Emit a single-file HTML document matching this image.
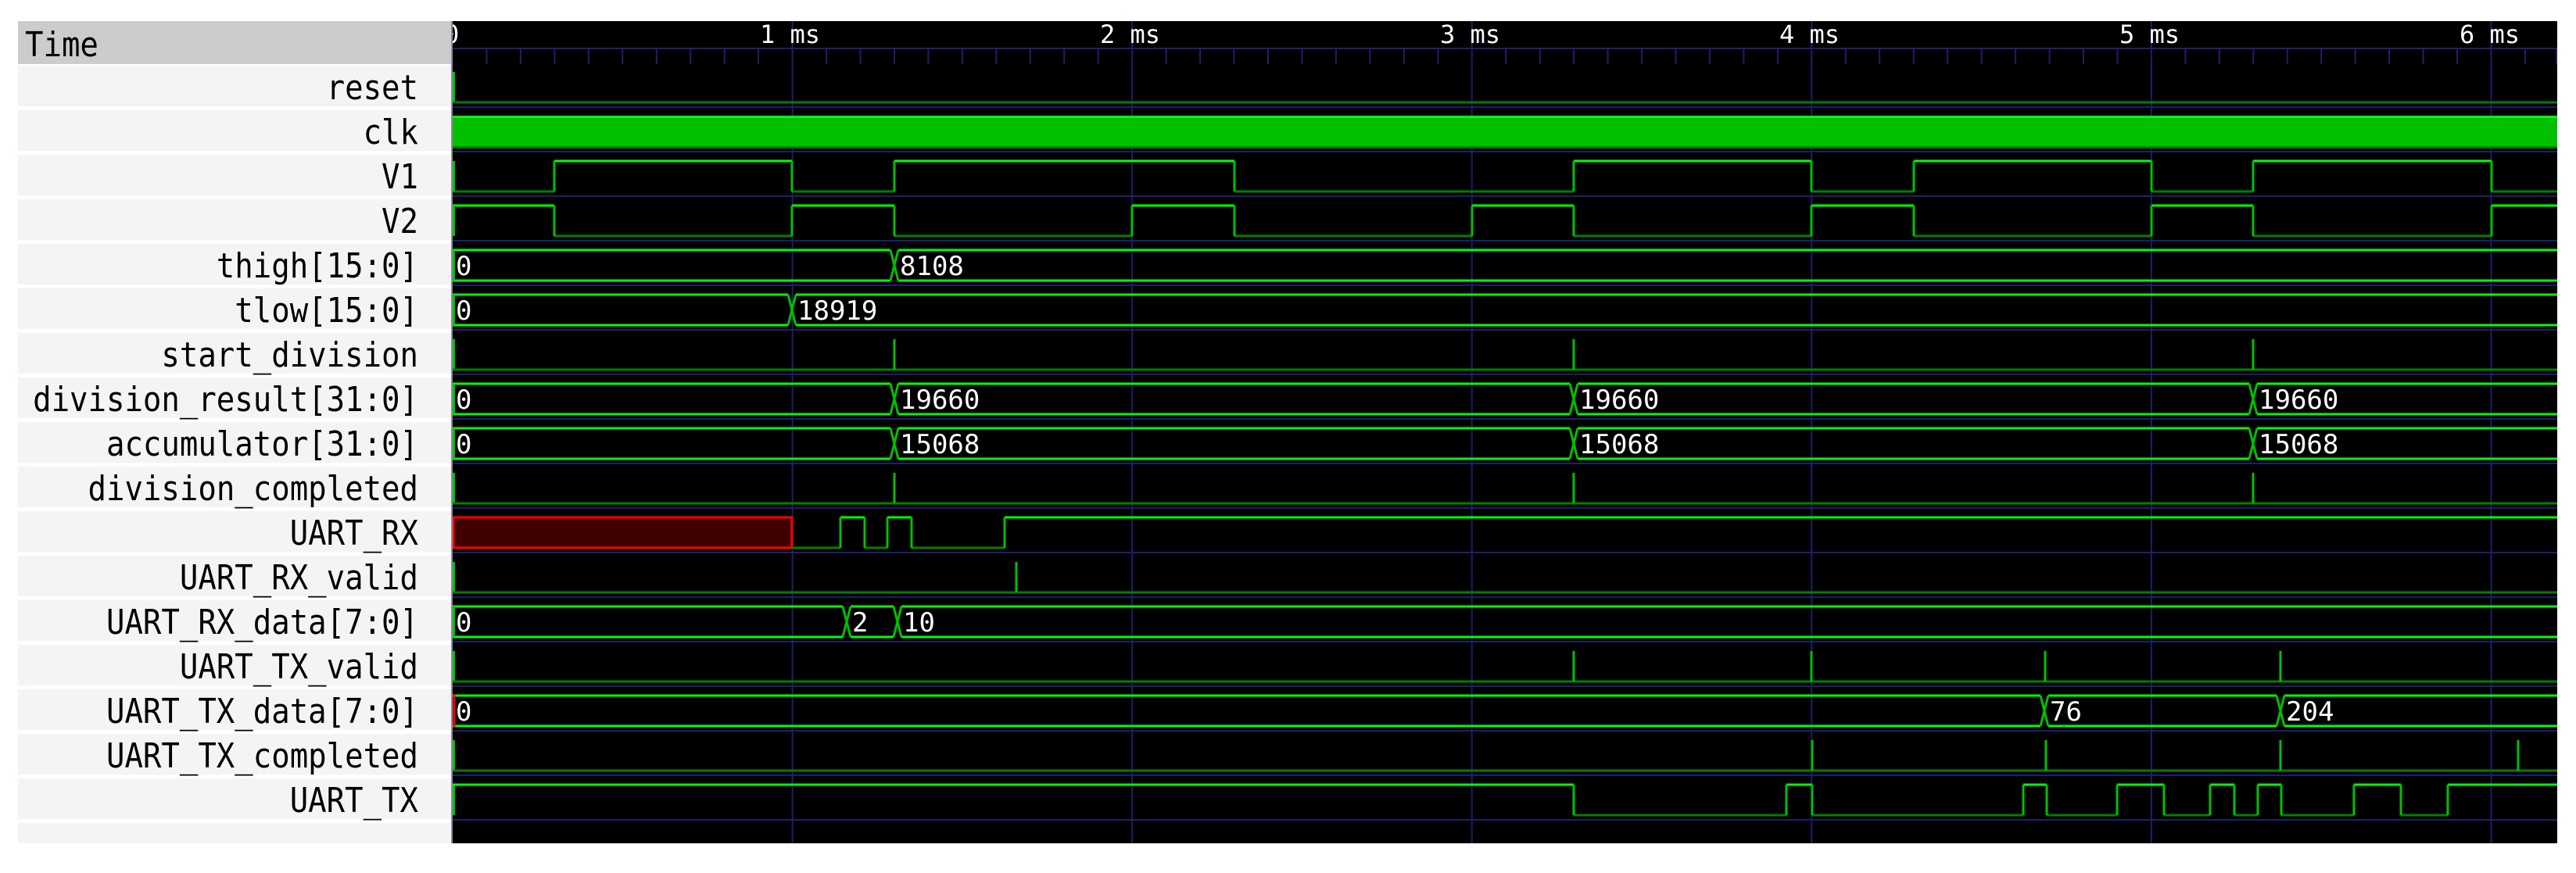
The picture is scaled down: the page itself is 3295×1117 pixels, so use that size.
<!DOCTYPE html>
<html><head><meta charset="utf-8"><style>
html,body{margin:0;padding:0;background:#fff;width:3295px;height:1117px;overflow:hidden}
svg{display:block}
.lb{font-family:"DejaVu Sans Mono","Liberation Mono",monospace;font-size:39px;fill:#000}
.vt{font-family:"DejaVu Sans Mono","Liberation Mono",monospace;font-size:34px;fill:#fff}
.rt{font-family:"DejaVu Sans Mono","Liberation Mono",monospace;font-size:32px;fill:#fff}
.hi{stroke:#00ff00;stroke-width:3;fill:none}
.lo{stroke:#008000;stroke-width:3;fill:none}
.ed{stroke:#00c000;stroke-width:3;fill:none}
.nv{stroke:#1e1e6e;stroke-width:2;fill:none}
</style></head><body>
<svg width="3295" height="1117" viewBox="0 0 3295 1117" xmlns="http://www.w3.org/2000/svg">
<defs><clipPath id="pc"><rect x="579" y="27" width="2692" height="1052"/></clipPath></defs>
<rect x="0" y="0" width="3295" height="1117" fill="#fff"/>
<!-- label panel -->
<rect x="23" y="27" width="554" height="55" fill="#cccccc"/>
<g fill="#f5f3f3">
<rect x="23" y="84" width="554" height="52"/><rect x="23" y="141" width="554" height="52"/><rect x="23" y="198" width="554" height="52"/><rect x="23" y="255" width="554" height="52"/><rect x="23" y="312" width="554" height="52"/><rect x="23" y="369" width="554" height="52"/><rect x="23" y="426" width="554" height="52"/><rect x="23" y="483" width="554" height="52"/><rect x="23" y="540" width="554" height="52"/><rect x="23" y="597" width="554" height="52"/><rect x="23" y="654" width="554" height="52"/><rect x="23" y="711" width="554" height="52"/><rect x="23" y="768" width="554" height="52"/><rect x="23" y="825" width="554" height="52"/><rect x="23" y="882" width="554" height="52"/><rect x="23" y="939" width="554" height="52"/><rect x="23" y="996" width="554" height="52"/><rect x="23" y="1053" width="554" height="26"/>
</g>
<text class="lb" transform="translate(32,72) scale(1,1.12)">Time</text>
<g class="lb" text-anchor="end">
<text transform="translate(535,127) scale(1,1.12)">reset</text>
<text transform="translate(535,184) scale(1,1.12)">clk</text>
<text transform="translate(535,241) scale(1,1.12)">V1</text>
<text transform="translate(535,298) scale(1,1.12)">V2</text>
<text transform="translate(535,355) scale(1,1.12)">thigh[15:0]</text>
<text transform="translate(535,412) scale(1,1.12)">tlow[15:0]</text>
<text transform="translate(535,469) scale(1,1.12)">start_division</text>
<text transform="translate(535,526) scale(1,1.12)">division_result[31:0]</text>
<text transform="translate(535,583) scale(1,1.12)">accumulator[31:0]</text>
<text transform="translate(535,640) scale(1,1.12)">division_completed</text>
<text transform="translate(535,697) scale(1,1.12)">UART_RX</text>
<text transform="translate(535,754) scale(1,1.12)">UART_RX_valid</text>
<text transform="translate(535,811) scale(1,1.12)">UART_RX_data[7:0]</text>
<text transform="translate(535,868) scale(1,1.12)">UART_TX_valid</text>
<text transform="translate(535,925) scale(1,1.12)">UART_TX_data[7:0]</text>
<text transform="translate(535,982) scale(1,1.12)">UART_TX_completed</text>
<text transform="translate(535,1039) scale(1,1.12)">UART_TX</text>
</g>
<!-- wave panel -->
<rect x="577" y="27" width="2694" height="1052" fill="#000"/>
<rect x="577" y="27" width="2" height="1052" fill="#8a8aa0"/>
<g clip-path="url(#pc)">
<!-- ruler -->
<path class="nv" d="M579 62H3271"/>
<path class="nv" d="M622.5 62V82M665.9 62V82M709.4 62V82M752.8 62V82M796.3 62V82M839.8 62V82M883.2 62V82M926.7 62V82M970.1 62V82M1057 62V82M1100.5 62V82M1144 62V82M1187.4 62V82M1230.9 62V82M1274.3 62V82M1317.8 62V82M1361.2 62V82M1404.7 62V82M1491.6 62V82M1535.1 62V82M1578.5 62V82M1622 62V82M1665.4 62V82M1708.9 62V82M1752.4 62V82M1795.8 62V82M1839.3 62V82M1926.2 62V82M1969.7 62V82M2013.1 62V82M2056.6 62V82M2100 62V82M2143.5 62V82M2186.9 62V82M2230.4 62V82M2273.9 62V82M2360.8 62V82M2404.2 62V82M2447.7 62V82M2491.1 62V82M2534.6 62V82M2578.1 62V82M2621.5 62V82M2665 62V82M2708.4 62V82M2795.4 62V82M2838.8 62V82M2882.3 62V82M2925.7 62V82M2969.2 62V82M3012.6 62V82M3056.1 62V82M3099.5 62V82M3143 62V82M3229.9 62V82M3270 62V82"/>
<path class="nv" d="M1013.6 27V1079M1448.2 27V1079M1882.7 27V1079M2317.3 27V1079M2751.9 27V1079M3186.5 27V1079"/>
<path class="nv" d="M579 137H3271M579 194H3271M579 251H3271M579 308H3271M579 365H3271M579 422H3271M579 479H3271M579 536H3271M579 593H3271M579 650H3271M579 707H3271M579 764H3271M579 821H3271M579 878H3271M579 935H3271M579 992H3271M579 1049H3271"/>
<g class="rt">
<text x="568" y="55">0</text>
<text x="972" y="55">1 ms</text>
<text x="1407" y="55">2 ms</text>
<text x="1842" y="55">3 ms</text>
<text x="2276" y="55">4 ms</text>
<text x="2711" y="55">5 ms</text>
<text x="3146" y="55">6 ms</text>
</g>
<!-- initial edges -->
<path class="ed" d="M580.5 92V131M580.5 434V473M580.5 605V644M580.5 719V758M580.5 833V872M580.5 947V986M580.5 1004V1043"/>
<!-- reset -->
<path class="lo" d="M579 131H3271"/>
<!-- clk -->
<rect x="579" y="149" width="2692" height="40" fill="#00c000"/>
<path class="hi" d="M579 149.5H3271"/><path class="lo" d="M579 188.5H3271"/>
<!-- V1 -->
<path class="hi" d="M709 206H1013M1144 206H1579M2013 206H2317M2448 206H2752M2882 206H3187"/>
<path class="lo" d="M579 245H709M1013 245H1144M1579 245H2013M2317 245H2448M2752 245H2882M3187 245H3271"/>
<path class="ed" d="M580.5 206V245M709 206V245M1013 206V245M1144 206V245M1579 206V245M2013 206V245M2317 206V245M2448 206V245M2752 206V245M2882 206V245M3187 206V245"/>
<!-- V2 -->
<path class="hi" d="M579 263H709M1013 263H1144M1448 263H1579M1883 263H2013M2317 263H2448M2752 263H2882M3187 263H3271"/>
<path class="lo" d="M709 302H1013M1144 302H1448M1579 302H1883M2013 302H2317M2448 302H2752M2882 302H3187"/>
<path class="ed" d="M580.5 263V302M709 263V302M1013 263V302M1144 263V302M1448 263V302M1579 263V302M1883 263V302M2013 263V302M2317 263V302M2448 263V302M2752 263V302M2882 263V302M3187 263V302"/>
<!-- thigh -->
<path class="hi" d="M579 320H1139M1149 320H3271M579 359H1139M1149 359H3271"/>
<path class="ed" d="M1139 320L1149 359M1139 359L1149 320M580.5 320V359"/>
<!-- tlow -->
<path class="hi" d="M579 377H1008M1018 377H3271M579 416H1008M1018 416H3271"/>
<path class="ed" d="M1008 377L1018 416M1008 416L1018 377M580.5 377V416"/>
<!-- start_division -->
<path class="lo" d="M579 473H3271"/>
<path class="ed" d="M1144 434V473M2013 434V473M2882 434V473"/>
<!-- division_result -->
<path class="hi" d="M579 491H1139M1149 491H2008M2018 491H2877M2887 491H3271M579 530H1139M1149 530H2008M2018 530H2877M2887 530H3271"/>
<path class="ed" d="M580.5 491V530M1139 491L1149 530M1139 530L1149 491M2008 491L2018 530M2008 530L2018 491M2877 491L2887 530M2877 530L2887 491"/>
<!-- accumulator -->
<path class="hi" d="M579 548H1139M1149 548H2008M2018 548H2877M2887 548H3271M579 587H1139M1149 587H2008M2018 587H2877M2887 587H3271"/>
<path class="ed" d="M580.5 548V587M1139 548L1149 587M1139 587L1149 548M2008 548L2018 587M2008 587L2018 548M2877 548L2887 587M2877 587L2887 548"/>
<!-- division_completed -->
<path class="lo" d="M579 644H3271"/>
<path class="ed" d="M1144 605V644M2013 605V644M2882 605V644"/>
<!-- UART_RX -->
<rect x="580" y="662" width="433" height="39" fill="#400000" stroke="#ff0000" stroke-width="3"/>
<path class="lo" d="M1013 701H1075M1106 701H1135M1166 701H1285"/>
<path class="hi" d="M1075 662H1106M1135 662H1166M1285 662H3271"/>
<path class="ed" d="M1075 662V701M1106 662V701M1135 662V701M1166 662V701M1285 662V701"/>
<!-- UART_RX_valid -->
<path class="lo" d="M579 758H3271"/>
<path class="ed" d="M1300 719V758"/>
<!-- UART_RX_data -->
<path class="hi" d="M579 776H1078M1088 776H1143M1153 776H3271M579 815H1078M1088 815H1143M1153 815H3271"/>
<path class="ed" d="M580.5 776V815M1078 776L1088 815M1078 815L1088 776M1143 776L1153 815M1143 815L1153 776"/>
<!-- UART_TX_valid -->
<path class="lo" d="M579 872H3271"/>
<path class="ed" d="M2013 833V872M2317 833V872M2616 833V872M2917 833V872"/>
<!-- UART_TX_data -->
<path class="hi" d="M579 890H2610M2620 890H2912M2922 890H3271M579 929H2610M2620 929H2912M2922 929H3271"/>
<path class="ed" d="M2610 890L2620 929M2610 929L2620 890M2912 890L2922 929M2912 929L2922 890"/>
<path d="M581 888V931" stroke="#ff0000" stroke-width="3"/>
<!-- UART_TX_completed -->
<path class="lo" d="M579 986H3271"/>
<path class="ed" d="M2318 947V986M2617 947V986M2917 947V986M3221 947V986"/>
<!-- UART_TX -->
<path class="hi" d="M579 1004H2013M2285 1004H2318M2588 1004H2618M2708 1004H2768M2827 1004H2858M2888 1004H2918M3011 1004H3071M3131 1004H3271"/>
<path class="lo" d="M2013 1043H2285M2318 1043H2588M2618 1043H2708M2768 1043H2827M2858 1043H2888M2918 1043H3011M3071 1043H3131"/>
<path class="ed" d="M2013 1004V1043M2285 1004V1043M2318 1004V1043M2588 1004V1043M2618 1004V1043M2708 1004V1043M2768 1004V1043M2827 1004V1043M2858 1004V1043M2888 1004V1043M2918 1004V1043M3011 1004V1043M3071 1004V1043M3131 1004V1043"/>
<!-- values -->
<g class="vt">
<text x="583" y="352">0</text><text x="1151" y="352">8108</text>
<text x="583" y="409">0</text><text x="1020" y="409">18919</text>
<text x="583" y="523">0</text><text x="1151" y="523">19660</text><text x="2020" y="523">19660</text><text x="2889" y="523">19660</text>
<text x="583" y="580">0</text><text x="1151" y="580">15068</text><text x="2020" y="580">15068</text><text x="2889" y="580">15068</text>
<text x="583" y="808">0</text><text x="1090" y="808">2</text><text x="1155" y="808">10</text>
<text x="583" y="922">0</text><text x="2622" y="922">76</text><text x="2924" y="922">204</text>
</g>
</g>
</svg>
</body></html>
